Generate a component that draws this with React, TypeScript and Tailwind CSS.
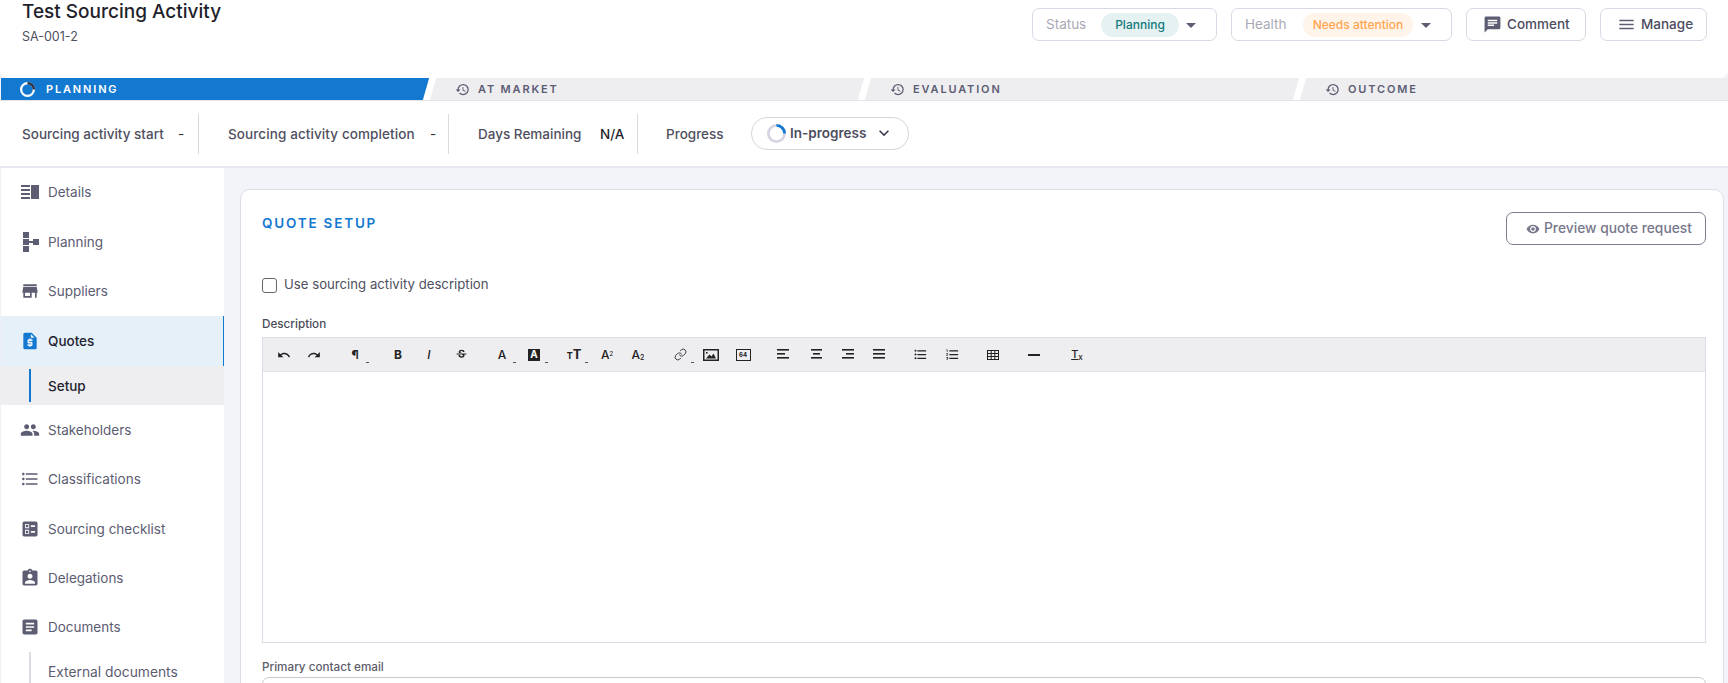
import React from "react";
import { Link as LinkIcon } from "lucide-react";
import {
  MdHistory, MdArrowDropDown, MdChat, MdMenu, MdStore, MdRequestQuote, MdPeople, MdFormatListBulleted, MdBallot,
  MdAssignmentInd, MdArticle, MdVisibility, MdKeyboardArrowDown, MdUndo, MdRedo, MdStrikethroughS, MdFormatListNumbered,
} from "react-icons/md";

function DetailsIcon() {
  return (
    <svg width="18" height="14" viewBox="0 0 18 14" fill="#5c5c72">
      <rect x="0" y="0" width="9" height="2" /><rect x="0" y="4" width="9" height="2" />
      <rect x="0" y="8" width="9" height="2" /><rect x="0" y="12" width="9" height="2" />
      <rect x="10" y="0" width="8" height="14" />
    </svg>
  );
}
function PlanningIcon() {
  return (
    <svg width="17" height="20" viewBox="0 0 17 20" fill="#5c5c72">
      <rect x="1" y="0" width="6" height="6" /><rect x="1" y="7" width="6" height="6" />
      <rect x="1" y="14" width="6" height="6" /><rect x="7" y="9" width="4" height="2" /><rect x="11" y="7" width="6" height="6" />
    </svg>
  );
}
function Spinner({ size, track, head, w }: { size: number; track: string; head: string; w: number }) {
  const r = 10 - w / 2;
  return (
    <svg width={size} height={size} viewBox="0 0 20 20" fill="none">
      <circle cx="10" cy="10" r={r} stroke={track} strokeWidth={w} />
      <path d={`M10 ${10 - r} A${r} ${r} 0 0 1 ${10 + r} 10`} stroke={head} strokeWidth={w} />
    </svg>
  );
}
function Align({ bars }: { bars: [number, number][] }) {
  return (
    <svg width="13" height="11" viewBox="0 0 13 11" fill="#222">
      {bars.map(([x, w], i) => <rect key={i} x={x} y={i * 4} width={w} height="1.6" />)}
    </svg>
  );
}

function Tab({ label, active, last, className = "" }: { label: string; active?: boolean; last?: boolean; className?: string }) {
  return (
    <div className={`relative flex items-center h-full ${active ? "bg-[#1278d0] text-white pl-[19px]" : "bg-[#eeeef1] text-[#5c5c72] pl-[26px]"} ${className}`}>
      {active ? <Spinner size={15} track="#ffffff" head="#2a2a3a" w={3} /> : <MdHistory className="w-[15px] h-[15px]" />}
      <span className={`${active ? "ml-[11px]" : "ml-[8px]"} text-[11px] font-semibold tracking-[1.85px]`}>{label}</span>
      {!last && <span className="absolute z-10 right-[-3.5px] top-0 h-full w-[7px] bg-white -skew-x-[16deg]" />}
    </div>
  );
}

function Divider() {
  return <div className="w-px h-[40px] bg-[#d9d9de] shrink-0" />;
}

function NavItem({ icon, label, active, className = "" }: { icon: React.ReactNode; label: string; active?: boolean; className?: string }) {
  return (
    <div className={`flex items-center pl-[19px] text-[13.5px] ${active ? "h-[50px] bg-[#e5f0f9] border-r border-[#1278d0] text-[#23232f] font-medium" : "h-[49.4px] text-[#5c5c72]"} ${className}`}>
      <span className="w-[20px] flex justify-center items-center">{icon}</span>
      <span className="ml-[8px]">{label}</span>
    </div>
  );
}

const ic = "w-[20px] h-[20px] text-[#5c5c72]";
const tb = "text-[#222] w-[15px] h-[15px]";

function Tool({ children, x, caret }: { children: React.ReactNode; x: number; caret?: boolean }) {
  return (
    <span className="absolute top-0 h-full flex items-center justify-center w-[20px]" style={{ left: x - 10 }}>
      {children}
      {caret && <span className="absolute left-[21px] top-[24px] w-[3px] h-px bg-[#555]" />}
    </span>
  );
}

export default function App() {
  return (
    <div className="w-[1728px] h-[683px] overflow-hidden bg-[#f3f4f9] flex flex-col text-[#5c5c72] font-['Inter','Liberation_Sans',sans-serif]">
      {/* Header */}
      <div className="h-[78px] bg-white rounded-b-[8px] flex items-start justify-between pl-[22px] pr-[21px] shrink-0">
        <div>
          <div className="text-[19px] leading-[24px] font-medium text-[#1f1f2b]">Test Sourcing Activity</div>
          <div className="text-[12.5px] leading-[16px] mt-[5px] text-[#4f4f60]">SA-001-2</div>
        </div>
        <div className="flex items-center gap-[14px] mt-[8px]">
          <div className="h-[33px] w-[185px] border border-[#d9d8e4] rounded-[7px] flex items-center pl-[13px]">
            <span className="text-[13.5px] text-[#a9a9b5] w-[55px]">Status</span>
            <span className="h-[24px] w-[78px] rounded-full bg-[#e6f1f1] text-[#137a7d] text-[12px] font-medium flex items-center justify-center">Planning</span>
            <MdArrowDropDown className="w-[24px] h-[24px] text-[#5c5c72]" />
          </div>
          <div className="h-[33px] w-[221px] border border-[#d9d8e4] rounded-[7px] flex items-center pl-[13px]">
            <span className="text-[13.5px] text-[#a9a9b5] w-[58px]">Health</span>
            <span className="h-[24px] w-[110px] rounded-full bg-[#fff4e9] text-[#ffa552] text-[12px] font-medium flex items-center justify-center">Needs attention</span>
            <MdArrowDropDown className="ml-[1px] w-[24px] h-[24px] text-[#5c5c72]" />
          </div>
          <div className="h-[33px] w-[120px] border border-[#d9d8e4] rounded-[7px] flex items-center pl-[16px] text-[13.5px] font-medium text-[#4c4c5e]">
            <MdChat className="w-[19px] h-[19px] text-[#5c5c72] mr-[5px]" />
            Comment
          </div>
          <div className="h-[33px] w-[107px] border border-[#d9d8e4] rounded-[7px] flex items-center pl-[16px] text-[13.5px] font-medium text-[#4c4c5e]">
            <MdMenu className="w-[19px] h-[19px] text-[#5c5c72] mr-[5px]" />
            Manage
          </div>
        </div>
      </div>

      {/* Stage bar */}
      <div className="h-[23px] flex shrink-0 border-b border-[#e2e4ec] pl-px">
        <Tab label="PLANNING" active className="w-[428px]" />
        <Tab label="AT MARKET" className="w-[435px]" />
        <Tab label="EVALUATION" className="w-[435px]" />
        <Tab label="OUTCOME" last className="flex-1" />
      </div>

      {/* Info row */}
      <div className="h-[67px] bg-white border-b-2 border-[#e6e8ef] flex items-center pl-[22px] text-[13.5px] shrink-0 pt-[1px]">
        <span className="w-[156px] text-[#4f4f60] font-medium">Sourcing activity start</span>
        <span className="text-[#333] w-[20px]">-</span>
        <Divider />
        <span className="ml-[29px] w-[202px] tracking-[0.1px] text-[#4f4f60] font-medium">Sourcing activity completion</span>
        <span className="text-[#333] w-[18px]">-</span>
        <Divider />
        <span className="ml-[29px] w-[122px] text-[#4f4f60] font-medium">Days Remaining</span>
        <span className="w-[37px] text-[#1f1f2b] font-medium">N/A</span>
        <Divider />
        <span className="ml-[28px] w-[85px] text-[#4f4f60] font-medium">Progress</span>
        <div className="w-[158px] h-[33px] rounded-[16px] border border-[#d5d5de] flex items-center pl-[15px] mb-[2px]">
          <Spinner size={19} track="#d5d6e2" head="#1278d0" w={3} />
          <span className="ml-[4px] text-[13.5px] font-semibold text-[#4c4c5e]">In-progress</span>
          <MdKeyboardArrowDown className="ml-[8px] w-[20px] h-[20px] text-[#3c3c4c]" />
        </div>
      </div>

      {/* Body */}
      <div className="flex-1 min-h-0 flex">
        <div className="w-[224px] bg-white border-l border-[#eef0f5] shrink-0 overflow-hidden">
          <NavItem icon={<DetailsIcon />} label="Details" className="pb-[2px]" />
          <NavItem icon={<PlanningIcon />} label="Planning" />
          <NavItem icon={<MdStore className={ic} />} label="Suppliers" />
          <NavItem icon={<MdRequestQuote className="w-[20px] h-[20px] text-[#1278d0]" />} label="Quotes" active />
          <div className="h-[39px] bg-[#eeeef0] pl-[28px] flex items-center">
            <span className="w-[2px] h-[33px] bg-[#1278d0]" />
            <span className="ml-[17px] text-[13.5px] font-medium text-[#23232f]">Setup</span>
          </div>
          <NavItem icon={<MdPeople className="w-[22px] h-[22px] text-[#5c5c72]" />} label="Stakeholders" />
          <NavItem icon={<MdFormatListBulleted className={ic} />} label="Classifications" />
          <NavItem icon={<MdBallot className={ic} />} label="Sourcing checklist" />
          <NavItem icon={<MdAssignmentInd className={ic} />} label="Delegations" />
          <NavItem icon={<MdArticle className={ic} />} label="Documents" />
          <div className="h-[40px] pl-[28px] flex items-center">
            <span className="w-[2px] h-[40px] bg-[#dcdce4]" />
            <span className="ml-[17px] text-[13.8px] text-[#5c5c72]">External documents</span>
          </div>
        </div>

        <div className="flex-1 min-w-0 pl-[16px] pr-[4px] pt-[21px]">
          <div className="bg-white border border-[#dcdce6] rounded-[10px] h-[600px] pl-[21px] pr-[17px] pt-[22px]">
            <div className="flex justify-between items-start">
              <div className="text-[13.5px] leading-[20px] font-semibold tracking-[1.8px] text-[#1278d0] mt-px">QUOTE SETUP</div>
              <div className="h-[33px] w-[200px] border border-[#7d7d92] rounded-[7px] flex items-center pl-[19px] text-[13.8px] font-medium text-[#77778c]">
                <MdVisibility className="w-[14px] h-[14px] mr-[4px]" />
                Preview quote request
              </div>
            </div>
            <label className="flex items-center mt-[30px] h-[20px]">
              <span className="w-[15px] h-[15px] border border-[#66666e] rounded-[3px]" />
              <span className="ml-[7px] text-[13.2px] text-[#4f4f60]">Use sourcing activity description</span>
            </label>
            <div className="mt-[22px] text-[11.7px] leading-[14px] font-medium text-[#4a4a58]">Description</div>
            <div className="mt-[6px] h-[306px] border border-[#dcdce6] flex flex-col">
              <div className="relative h-[34px] bg-[#eeeef0] border-b border-[#dfe3e8] shrink-0 text-[#222]">
                <Tool x={21}><MdUndo className="w-[14px] h-[14px]" /></Tool>
                <Tool x={51}><MdRedo className="w-[14px] h-[14px]" /></Tool>
                <Tool x={92} caret><span className="text-[12px] font-bold">¶</span></Tool>
                <Tool x={135}><span className="text-[12px] font-bold">B</span></Tool>
                <Tool x={166}><span className="text-[12px] italic font-medium">I</span></Tool>
                <Tool x={198}><MdStrikethroughS className="w-[13px] h-[13px]" /></Tool>
                <Tool x={239} caret><span className="text-[12px] font-medium">A</span></Tool>
                <Tool x={271} caret><span className="w-[12px] h-[12px] bg-[#222] text-white text-[10px] font-bold flex items-center justify-center">A</span></Tool>
                <Tool x={311} caret><span className="font-bold text-[#222] text-[13px] leading-none"><span className="text-[9px]">T</span>T</span></Tool>
                <Tool x={344}><span className="text-[12px] font-medium leading-none">A<sup className="text-[6px]">2</sup></span></Tool>
                <Tool x={375}><span className="text-[12px] font-medium leading-none">A<sub className="text-[7px]">2</sub></span></Tool>
                <Tool x={417} caret><LinkIcon className="w-[13px] h-[13px]" strokeWidth={1.6} /></Tool>
                <Tool x={448}>
                  <svg width="16" height="12" viewBox="0 0 16 12" fill="none">
                    <rect x="0.75" y="0.75" width="14.5" height="10.5" stroke="#222" strokeWidth="1.5" />
                    <path d="M3 9.5 L6.5 5.5 L8.5 7.5 L10.5 4.5 L13 9.5Z" fill="#222" />
                    <rect x="3" y="3" width="1.6" height="1.6" fill="#222" />
                  </svg>
                </Tool>
                <Tool x={480}><span className="w-[15px] h-[12px] border-[1.5px] border-[#222] text-[6px] font-bold flex items-center justify-center">64</span></Tool>
                <Tool x={520}><Align bars={[[0, 12], [0, 8], [0, 12]]} /></Tool>
                <Tool x={553}><Align bars={[[1, 11], [3, 7], [1, 11]]} /></Tool>
                <Tool x={584}><Align bars={[[1, 12], [5, 8], [1, 12]]} /></Tool>
                <Tool x={616}><Align bars={[[0, 12], [0, 12], [0, 12]]} /></Tool>
                <Tool x={657}><MdFormatListBulleted className={tb} /></Tool>
                <Tool x={689}><MdFormatListNumbered className={tb} /></Tool>
                <Tool x={730}>
                  <svg width="12" height="10" viewBox="0 0 12 10" fill="none" stroke="#222" strokeWidth="1">
                    <rect x="0.5" y="0.5" width="11" height="9" />
                    <path d="M0.5 3.5H11.5M0.5 6.5H11.5M4.2 0.5V9.5M7.8 0.5V9.5" />
                  </svg>
                </Tool>
                <Tool x={771}><span className="w-[12px] h-[2px] bg-[#222]" /></Tool>
                <Tool x={814}><span className="text-[11px] font-medium underline leading-none">T<sub className="text-[8px] no-underline">x</sub></span></Tool>
              </div>
              <div className="flex-1" />
            </div>
            <div className="mt-[17px] text-[11.7px] leading-[14px] font-medium text-[#5c5c6a]">Primary contact email</div>
            <div className="mt-[3px] h-[36px] border border-[#c9c9d2] rounded-[7px]" />
          </div>
        </div>
      </div>
    </div>
  );
}
